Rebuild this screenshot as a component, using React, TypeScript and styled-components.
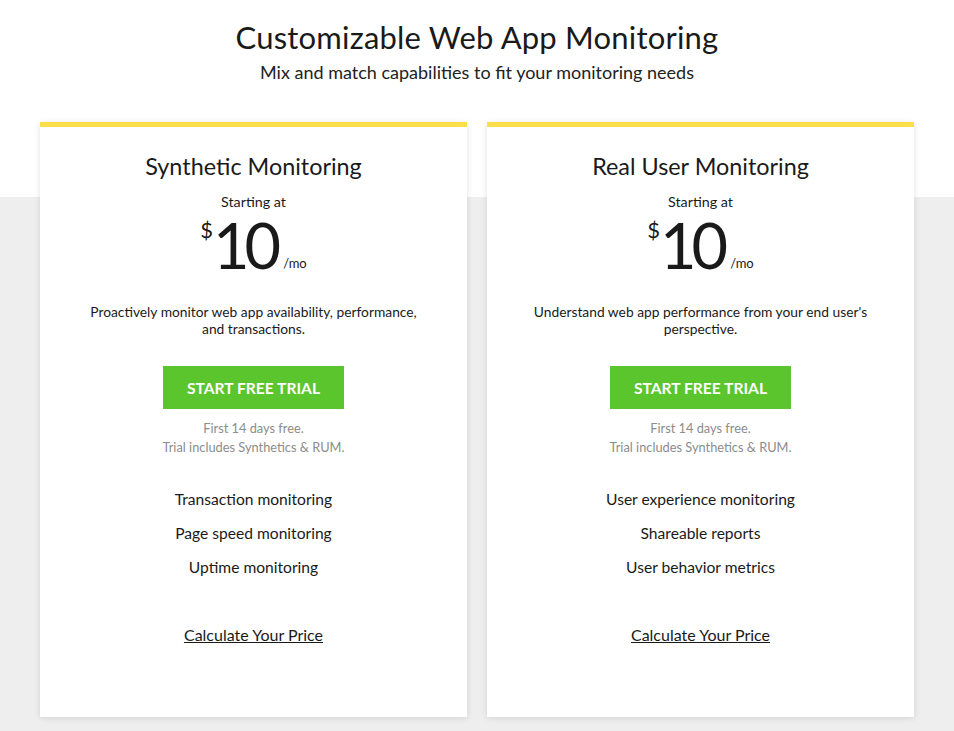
import React from 'react';
import styled, { createGlobalStyle } from 'styled-components';

const GlobalStyle = createGlobalStyle`
  html, body {
    margin: 0;
    padding: 0;
  }
  body {
    font-family: 'Lato', 'Noto Sans', sans-serif;
    color: #1a1a1a;
    background: linear-gradient(to bottom, #ffffff 197px, #eeeeee 197px);
    min-height: 100vh;
  }
`;

const Page = styled.div`
  display: flex;
  flex-direction: column;
  align-items: center;
  padding-top: 18px;
`;

const Heading = styled.h1`
  margin: 0;
  font-size: 31px;
  font-weight: 400;
  line-height: 38px;
  letter-spacing: 0.2px;
`;

const Subheading = styled.p`
  margin: 4px 0 0;
  font-size: 18px;
  line-height: 24px;
  color: #222;
`;

const Cards = styled.div`
  display: grid;
  grid-template-columns: 427px 427px;
  gap: 20px;
  margin-top: 38px;
`;

const Card = styled.div`
  background: #fff;
  border-top: 5px solid #fadf4a;
  height: 595px;
  box-shadow: 0 1px 6px rgba(0, 0, 0, 0.12);
  display: flex;
  flex-direction: column;
  align-items: center;
  text-align: center;
  padding-top: 24px;
  box-sizing: border-box;
`;

const PlanName = styled.h2`
  margin: 0;
  font-size: 23.4px;
  font-weight: 400;
  line-height: 30px;
`;

const Starting = styled.div`
  margin-top: 12px;
  font-size: 14.3px;
  line-height: 18px;
`;

const Price = styled.div`
  display: flex;
  align-items: flex-start;
  margin-top: 4px;
  height: 60px;
`;

const Currency = styled.span`
  font-size: 22px;
  line-height: 22px;
  margin-top: 4px;
`;

const Amount = styled.span`
  font-size: 63px;
  line-height: 60px;
  font-weight: 400;
  letter-spacing: -5px;
`;

const Per = styled.span`
  font-size: 13px;
  align-self: flex-end;
  margin-left: 7px;
  margin-bottom: 4px;
`;

const Description = styled.p`
  margin: 28px 0 0;
  width: 360px;
  font-size: 13.8px;
  line-height: 17px;
  height: 34px;
`;

const TrialButton = styled.button`
  margin-top: 29px;
  width: 181px;
  height: 43px;
  border: none;
  background: #5bc52e;
  color: #fff;
  font-family: 'Lato', sans-serif;
  font-weight: 700;
  font-size: 15.6px;
  cursor: pointer;
`;

const Note = styled.p`
  margin: 10px 0 0;
  font-size: 12.8px;
  line-height: 19px;
  color: #8c8c8c;
`;

const Features = styled.ul`
  list-style: none;
  margin: 25px 0 0;
  padding: 0;
`;

const Feature = styled.li`
  font-size: 15.6px;
  line-height: 34px;
`;

const PriceLink = styled.a`
  margin-top: 41px;
  font-size: 16px;
  line-height: 20px;
  color: #1a1a1a;
  text-decoration: underline;
  cursor: pointer;
`;

interface Plan {
  name: string;
  description: string[];
  features: string[];
}

const plans: Plan[] = [
  {
    name: 'Synthetic Monitoring',
    description: ['Proactively monitor web app availability, performance,', 'and transactions.'],
    features: ['Transaction monitoring', 'Page speed monitoring', 'Uptime monitoring'],
  },
  {
    name: 'Real User Monitoring',
    description: ["Understand web app performance from your end user's", 'perspective.'],
    features: ['User experience monitoring', 'Shareable reports', 'User behavior metrics'],
  },
];

const App: React.FC = () => (
  <>
    <GlobalStyle />
    <Page>
      <Heading>Customizable Web App Monitoring</Heading>
      <Subheading>Mix and match capabilities to fit your monitoring needs</Subheading>
      <Cards>
        {plans.map((plan) => (
          <Card key={plan.name}>
            <PlanName>{plan.name}</PlanName>
            <Starting>Starting at</Starting>
            <Price>
              <Currency>$</Currency>
              <Amount>10</Amount>
              <Per>/mo</Per>
            </Price>
            <Description>
              {plan.description[0]}
              <br />
              {plan.description[1]}
            </Description>
            <TrialButton>START FREE TRIAL</TrialButton>
            <Note>
              First 14 days free.
              <br />
              Trial includes Synthetics &amp; RUM.
            </Note>
            <Features>
              {plan.features.map((f) => (
                <Feature key={f}>{f}</Feature>
              ))}
            </Features>
            <PriceLink>Calculate Your Price</PriceLink>
          </Card>
        ))}
      </Cards>
    </Page>
  </>
);

export default App;
